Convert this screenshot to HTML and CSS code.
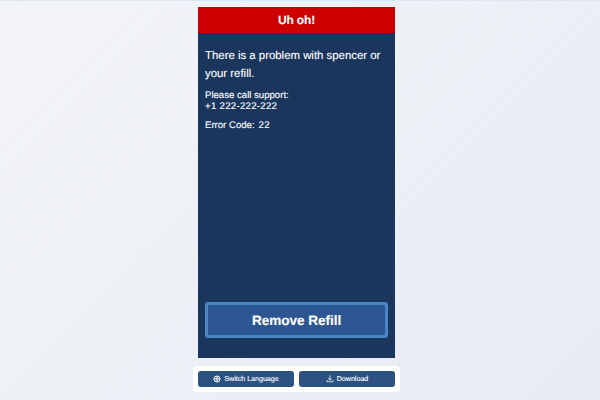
FILE: index.html
```html
<!DOCTYPE html>
<html lang="en">
<head>
<meta charset="utf-8">
<title>Uh oh!</title>
<link rel="stylesheet" href="styles.css">
</head>
<body>
<main class="screen">
  <section class="panel">
    <header class="panel-header">Uh oh!</header>
    <div class="panel-body">
      <div class="message">
        <p class="lead">There is a problem with spencer or your refill.</p>
        <p class="support">Please call support:<br><span class="digits">+1 222-222-222</span></p>
        <p class="code"><span>Error Code:</span><span class="digits">22</span></p>
      </div>
      <button class="remove" type="button">Remove Refill</button>
    </div>
  </section>
  <nav class="footer">
    <button class="foot-btn" type="button">
      <svg class="icon" viewBox="0 0 16 16" aria-hidden="true"><circle cx="8" cy="8" r="6" fill="none" stroke="currentColor" stroke-width="2"/><circle cx="8" cy="8" r="2.6" fill="none" stroke="currentColor" stroke-width="1.4"/><path d="M2 8h12M8 2v12" stroke="currentColor" stroke-width="1.2"/></svg>
      Switch Language
    </button>
    <button class="foot-btn" type="button">
      <svg class="icon" viewBox="0 0 16 16" aria-hidden="true"><path d="M8 1.5v8.5M4.8 7 8 10.2 11.2 7M2 11v2.5h12V11" fill="none" stroke="currentColor" stroke-width="1.5" stroke-linecap="round" stroke-linejoin="round"/></svg>
      Download
    </button>
  </nav>
</main>
</body>
</html>
```
FILE: styles.css
```css
* { box-sizing: border-box; }
html, body { height: 100%; }
body {
  margin: 0;
  background: linear-gradient(135deg, #f2f4f8 0%, #e7ebf2 100%);
  border-top: 1px solid #dbe7f5;
  font-family: "Liberation Sans", Arial, sans-serif;
  color: #fff;
  text-rendering: geometricPrecision;
  -webkit-text-stroke: 0.12px #fff;
}
.screen {
  display: flex;
  flex-direction: column;
  align-items: center;
  padding: 6px 7px 0 0;
}
.panel {
  width: 197px;
  height: 351px;
  background: #1a365d;
  display: flex;
  flex-direction: column;
}
.panel-header {
  height: 26px;
  flex: none;
  background: #cc0000;
  display: flex;
  align-items: center;
  justify-content: center;
  font-size: 12px;
  font-weight: 700;
  letter-spacing: -0.15px;
}
.panel-body {
  flex: 1;
  display: flex;
  flex-direction: column;
  justify-content: space-between;
  padding: 15px 7px 20px;
}
.message p { margin: 0; }
.lead { font-size: 11.4px; line-height: 17.5px; margin-bottom: 7px !important; }
.support { font-size: 9.6px; line-height: 11px; margin-bottom: 7px !important; }
.code { font-size: 9.6px; line-height: 14px; display: flex; gap: 4px; }
.digits { letter-spacing: 0.3px; }
.remove {
  width: 183px;
  height: 36px;
  background: #2c5591;
  border: 3px solid #4a86c5;
  border-radius: 3px;
  color: #fff;
  font: 700 13.6px "Liberation Sans", Arial, sans-serif;
  letter-spacing: -0.05px;
  text-rendering: geometricPrecision;
}
.footer {
  margin-top: 8px;
  width: 207px;
  height: 26px;
  background: #fff;
  border-radius: 4px;
  display: flex;
  gap: 5px;
  padding: 5px;
}
.foot-btn {
  flex: 1;
  background: #2c5282;
  border: 0;
  border-radius: 3px;
  color: #fff;
  font: 400 7.1px "Liberation Sans", Arial, sans-serif;
  text-rendering: geometricPrecision;
  display: flex;
  align-items: center;
  justify-content: center;
  gap: 3px;
  padding: 0;
}
.icon { width: 8px; height: 8px; flex: none; }
```
